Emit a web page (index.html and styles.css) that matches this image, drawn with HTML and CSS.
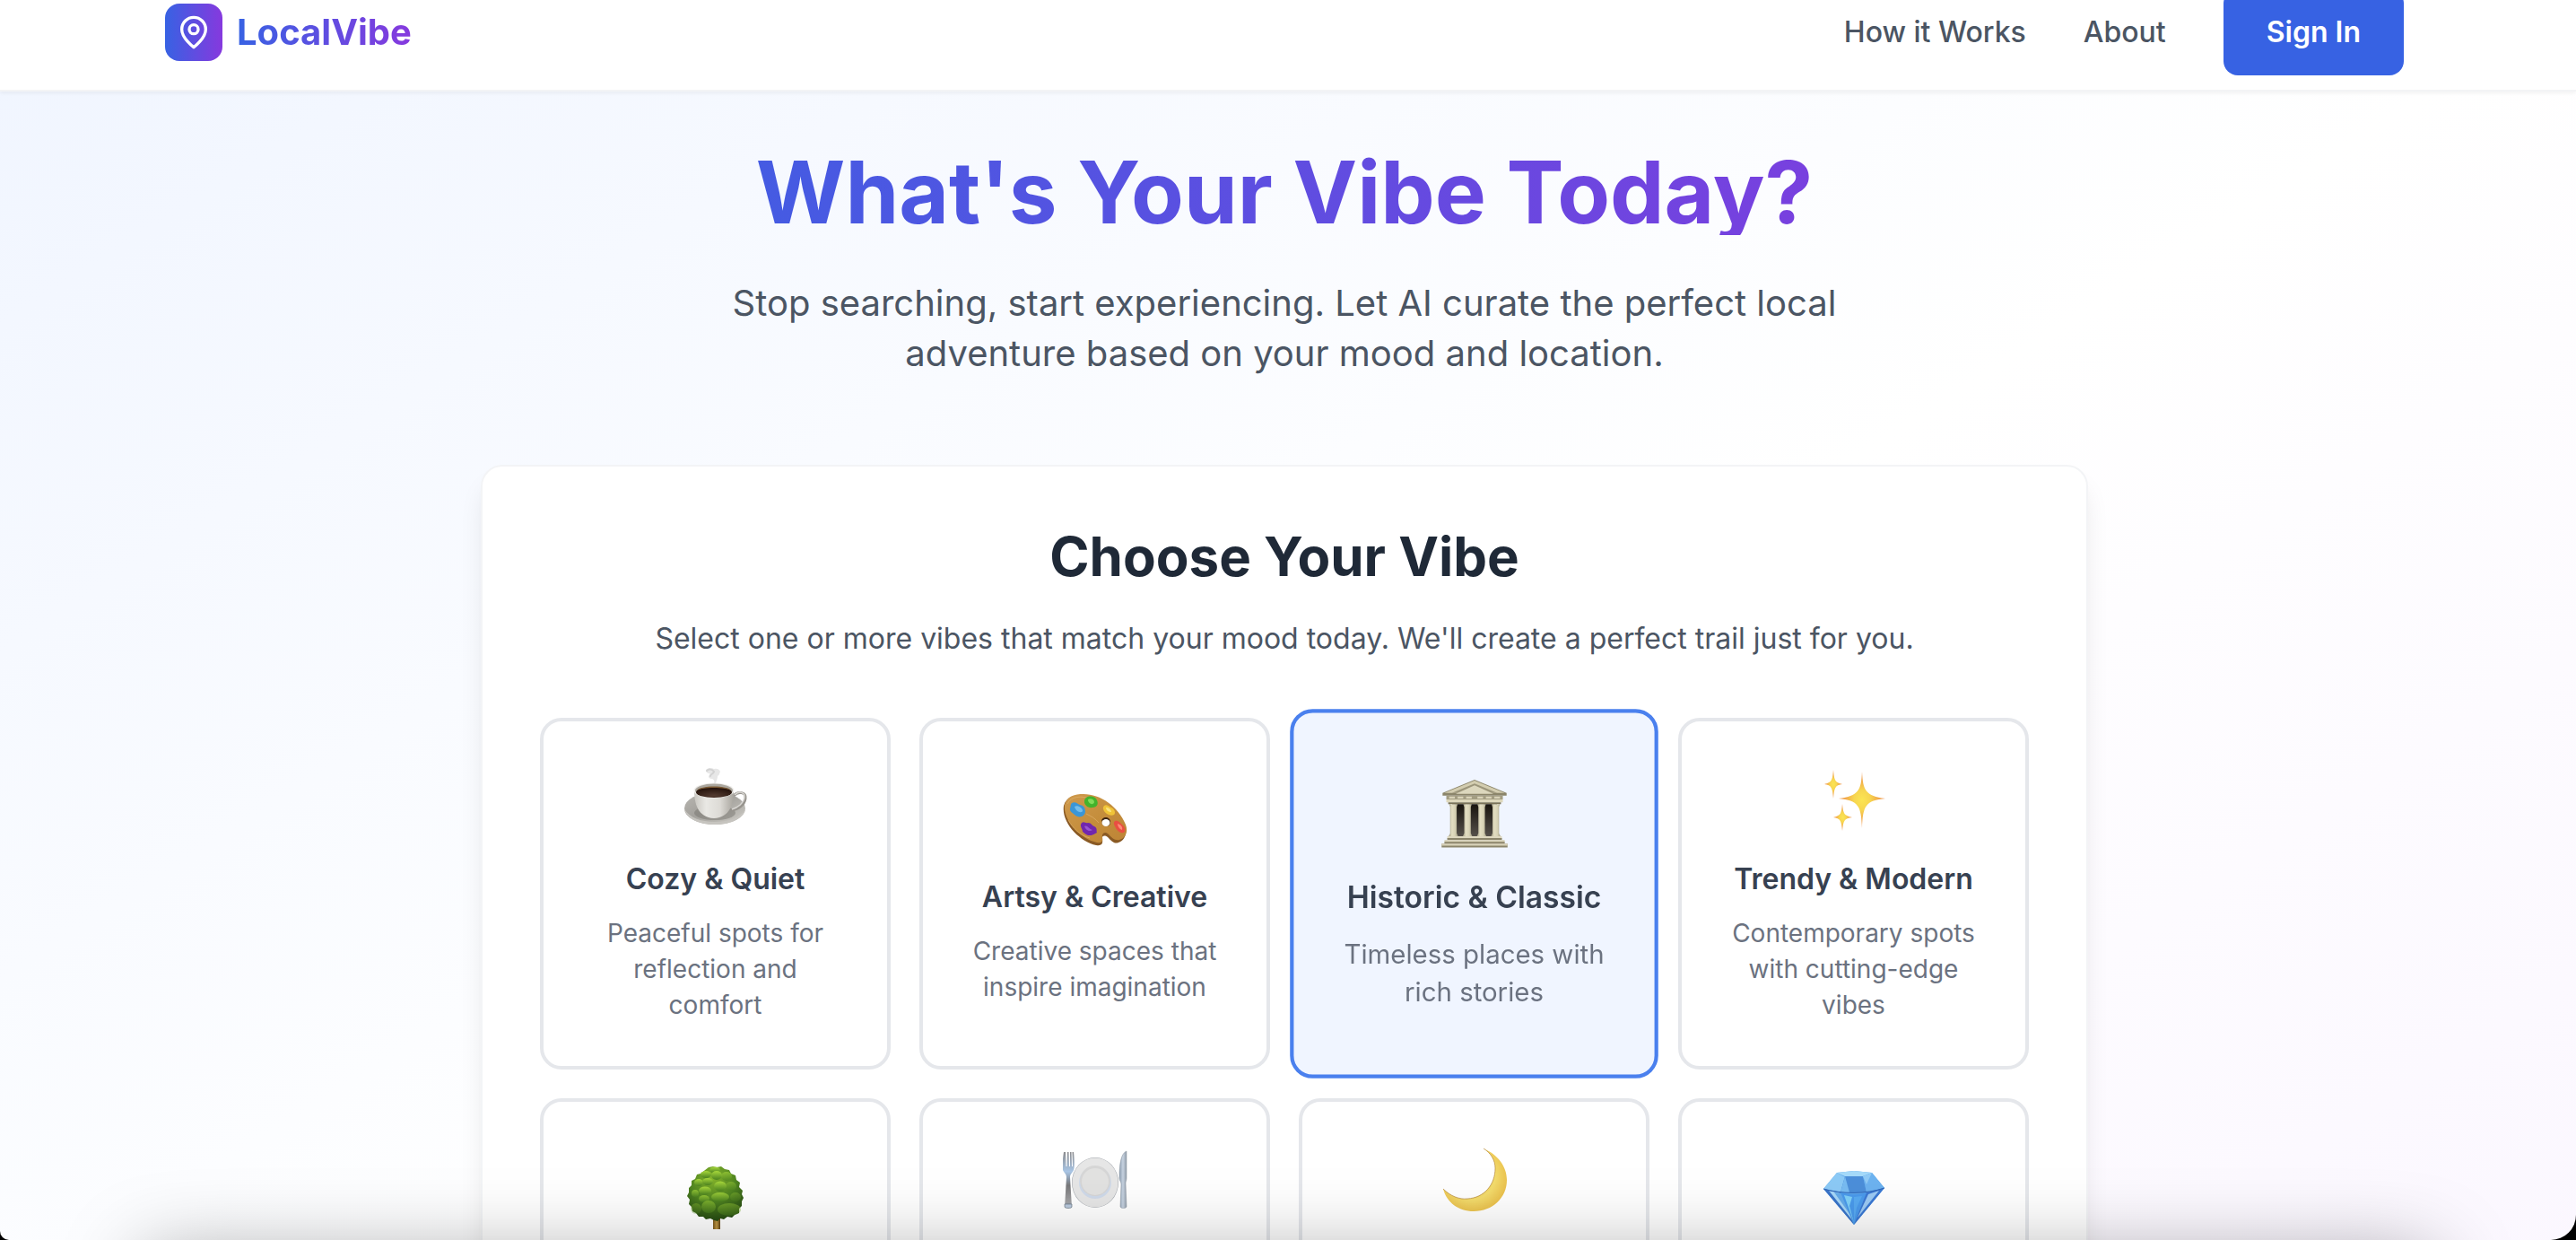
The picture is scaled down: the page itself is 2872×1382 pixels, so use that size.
FILE: index.html
```
<!DOCTYPE html>
<html lang="en">
<head>
    <meta charset="UTF-8">
    <meta name="viewport" content="width=device-width, initial-scale=1.0">
    <title>LocalVibe</title>
    <link rel="stylesheet" href="styles.css">
</head>
<body>
<div class="page">
    <header class="header">
        <div class="header-inner">
            <a class="logo" href="#">
                <span class="logo-icon">
                    <svg viewBox="0 0 24 24" fill="none" stroke="#fff" stroke-width="2" stroke-linecap="round" stroke-linejoin="round">
                        <path d="M20 10c0 6-8 12-8 12s-8-6-8-12a8 8 0 0 1 16 0Z"/>
                        <circle cx="12" cy="10" r="3"/>
                    </svg>
                </span>
                <span class="logo-text">LocalVibe</span>
            </a>
            <nav class="nav">
                <a href="#">How it Works</a>
                <a href="#">About</a>
                <button type="button" class="sign-in">Sign In</button>
            </nav>
        </div>
    </header>

    <main class="main">
        <section class="hero">
            <h1>What's Your Vibe Today?</h1>
            <p>Stop searching, start experiencing. Let AI curate the perfect local adventure based on your mood and location.</p>
        </section>

        <section class="panel">
            <h2>Choose Your Vibe</h2>
            <p class="panel-text">Select one or more vibes that match your mood today. We'll create a perfect trail just for you.</p>

            <div class="vibes">
                <button type="button" class="vibe" aria-pressed="false">
                    <svg class="vibe-icon" viewBox="0 0 72 80">
                        <defs>
                            <linearGradient id="cup" x1="0" x2="1">
                                <stop offset="0" stop-color="#c9c7c1"/>
                                <stop offset=".3" stop-color="#e9e8e4"/>
                                <stop offset=".65" stop-color="#dddbd6"/>
                                <stop offset="1" stop-color="#a8a59e"/>
                            </linearGradient>
                            <linearGradient id="saucer" x1="0" y1="0" x2="1" y2="1">
                                <stop offset="0" stop-color="#b9b7b2"/>
                                <stop offset=".45" stop-color="#a3a19c"/>
                                <stop offset="1" stop-color="#d0cec8"/>
                            </linearGradient>
                            <radialGradient id="coffee" cx=".5" cy=".8" r=".7">
                                <stop offset="0" stop-color="#533b30"/>
                                <stop offset="1" stop-color="#24120b"/>
                            </radialGradient>
                        </defs>
                        <path d="M25 6c3-3 7-2 9-1 3-1 6 0 7 3-1 2-1 4-3 5 0 3-1 4-2 8h-2c1-3 0-4-2-5-3 0-4-1-4-3 1-1 2-2 1-3-2 0-4-1-4-4z" fill="#c4c4c4" opacity=".4"/>
                        <path d="M26 7c2-2 6-2 8 1-1 4-4 2-4 5" fill="none" stroke="#b5b5b5" stroke-width="2" stroke-linecap="round" opacity=".4"/>
                        <ellipse cx="35" cy="49" rx="34" ry="18" fill="url(#saucer)"/>
                        <path d="M1 50c3 11 17 17 34 17S66 61 69 50c-6 9-18 14-34 14S7 59 1 50z" fill="#c6c4bf"/>
                        <ellipse cx="35" cy="54" rx="23" ry="8" fill="#777570" opacity=".5"/>
                        <path d="M56 35c5-6 14-4 13 3-1 7-8 12-16 13" fill="none" stroke="#97948e" stroke-width="3"/>
                        <path d="M57 34c5-5 12-3 11 3-1 6-7 11-14 13" fill="none" stroke="#d9d7d3" stroke-width="1.500"/>
                        <path d="M12 28c0 16 4 31 22 32 18-1 22-16 22-32z" fill="url(#cup)"/>
                        <ellipse cx="34" cy="29" rx="22.500" ry="8.500" fill="#eeedea"/>
                        <ellipse cx="34" cy="29" rx="21" ry="7.500" fill="#aaa69e"/>
                        <ellipse cx="34" cy="31" rx="20" ry="6" fill="url(#coffee)"/>
                        <path d="M15 29c3-6 35-6 38 0-6-4-32-4-38 0z" fill="#7c5a33"/>
                    </svg>
                    <span class="vibe-title">Cozy &amp; Quiet</span>
                    <span class="vibe-text">Peaceful spots for reflection and comfort</span>
                </button>

                <button type="button" class="vibe" aria-pressed="false">
                    <svg class="vibe-icon" viewBox="0 0 72 80">
                        <defs>
                            <linearGradient id="wood" x1="0" y1="0" x2="1" y2="1">
                                <stop offset="0" stop-color="#cf9a4e"/>
                                <stop offset=".5" stop-color="#c58e3c"/>
                                <stop offset="1" stop-color="#bd8436"/>
                            </linearGradient>
                        </defs>
                        <path d="M2 25C5 15 13 13 23 13c19 0 39 14 47 34 3 9 0 17-7 19-5 2-8-2-12-6-4-3-7-1-6 2 1 6-1 8-7 7C20 65-1 44 2 25z" transform="translate(-1 1)" fill="#8a5a24"/>
                        <path fill-rule="evenodd" d="M2 25C5 15 13 13 23 13c19 0 39 14 47 34 3 8 0 15-7 17-5 1-8-2-12-6-4-4-8-1-7 3 1 5-1 7-6 6C20 63 0 43 2 25zM53 45c0-7-10-8-10-1 0 6 10 7 10 1z" fill="url(#wood)"/>
                        <path d="M43 43c1-6 10-5 10 1 0 3-2 5-4 4 2-4-1-7-6-5z" fill="#3c2410"/>
                        <ellipse cx="48" cy="45" rx="4.500" ry="4" fill="#fff"/>
                        <path d="M5 24c4-9 16-9 25-6M6 42c5 9 13 17 24 20M26 35c6 3 10 5 14 10" fill="none" stroke="#dfb068" stroke-width="1" opacity=".7"/>
                        <path d="M10 23c4-2 6 1 9 2 5 1 6 4 6 8-1 6-8 7-12 3-2-2-6-4-5-7 1-1 0-4 2-6z" fill="#3b96d6"/>
                        <path d="M13 27c3-2 9 1 9 5-2 3-8 0-9-5z" fill="#74bdea"/>
                        <path d="M26 17c4-3 11-1 12 3 2 4 0 8-5 8-5 1-9-3-9-6 0-2 0-4 2-5z" fill="#43b32c"/>
                        <path d="M28 19c3-2 7 0 7 3-1 4-7 2-7-3z" fill="#81dc58"/>
                        <path d="M46 26c3-2 5 1 8 2 4 2 5 6 3 8-4 2-9-1-11-4-1-2-2-4 0-6z" fill="#f0c337"/>
                        <path d="M48 28c3 0 6 2 6 5-3 0-6-2-6-5z" fill="#fae37b"/>
                        <path d="M58 43c3-1 5 1 8 4 4 3 4 7 2 9-5 1-8-3-10-7-1-2-2-4 0-6z" fill="#e94f42"/>
                        <path d="M61 46c3 1 6 3 5 7-3-1-5-4-5-7z" fill="#ff8b78"/>
                        <path d="M21 45c3-2 4 1 7 0 4 0 4 3 7 4 4 2 2 5 3 7-3 1-4 3-8 3-4 0-5-2-8-4 0-4-4-6-1-10z" fill="#7127ad"/>
                        <path d="M24 49c3-2 5 3 9 4-3 2-7 1-9-4z" fill="#9955d1"/>
                    </svg>
                    <span class="vibe-title">Artsy &amp; Creative</span>
                    <span class="vibe-text">Creative spaces that inspire imagination</span>
                </button>

                <button type="button" class="vibe selected" aria-pressed="true">
                    <svg class="vibe-icon" viewBox="0 0 72 80">
                        <defs>
                            <linearGradient id="stone" x1="0" x2="1">
                                <stop offset="0" stop-color="#8f8a70"/>
                                <stop offset=".35" stop-color="#e3dec2"/>
                                <stop offset=".65" stop-color="#d8d3b6"/>
                                <stop offset="1" stop-color="#99947a"/>
                            </linearGradient>
                            <linearGradient id="inside" x1="0" y1="0" x2="0" y2="1">
                                <stop offset="0" stop-color="#18140e"/>
                                <stop offset="1" stop-color="#55504a"/>
                            </linearGradient>
                        </defs>
                        <path d="M36 3 70 17v3H2v-3z" fill="#8b856a"/>
                        <path d="M36 4 68 17H4z" fill="#d3cdb0"/>
                        <path d="M36 7 60 17H12z" fill="#9c967b"/>
                        <path d="M36 9 56 18H16z" fill="#dcd7bd"/>
                        <path d="M6 20h60v4H6z" fill="#a39d82"/>
                        <path d="M9 21h6v2H9zM18 21h6v2h-6zM27 21h6v2h-6zM39 21h6v2h-6zM48 21h6v2h-6zM57 21h6v2h-6z" fill="#d8d2b8"/>
                        <path d="M6 24h60v3H6z" fill="#ddd7bb"/>
                        <path d="M8 27h56v2H8z" fill="#7b7459"/>
                        <path d="M12 29h48v34H12z" fill="url(#inside)"/>
                        <path d="M9 29h9l-1 3v28l2 4H8l2-4V32z" fill="url(#stone)"/>
                        <path d="M24 29h9l-1 3v28l2 4H23l2-4V32z" fill="url(#stone)"/>
                        <path d="M39 29h9l-1 3v28l2 4H38l2-4V32z" fill="url(#stone)"/>
                        <path d="M54 29h9l-1 3v28l2 4H53l2-4V32z" fill="url(#stone)"/>
                        <path d="M7 63h58v3H7z" fill="#ded8bf"/>
                        <path d="M7 65h58v2H7z" fill="#8b856b"/>
                        <path d="M4 67h64v3H4z" fill="#d6d0b5"/>
                        <path d="M4 69h64v2H4z" fill="#8b856b"/>
                        <path d="M1 71h70v4H1z" fill="#8b856b"/>
                        <path d="M1 71h70v2H1z" fill="#d8d2b8"/>
                    </svg>
                    <span class="vibe-title">Historic &amp; Classic</span>
                    <span class="vibe-text">Timeless places with rich stories</span>
                </button>

                <button type="button" class="vibe" aria-pressed="false">
                    <svg class="vibe-icon" viewBox="0 0 72 80">
                        <defs>
                            <radialGradient id="spark">
                                <stop offset="0" stop-color="#fbe552"/>
                                <stop offset=".35" stop-color="#f7d650"/>
                                <stop offset=".7" stop-color="#f2a94a"/>
                                <stop offset="1" stop-color="#ef8f4c"/>
                            </radialGradient>
                        </defs>
                        <path d="M45 8c1 21 4 27 26 30-22 2-25 8-26 33-1-25-4-31-26-33 22-3 25-9 26-30z" fill="url(#spark)"/>
                        <path d="M13 6c1 12 2 14 10 16-8 1-9 4-10 16-1-12-2-15-10-16 8-2 9-4 10-16z" fill="url(#spark)"/>
                        <path d="M23 44c1 11 2 13 11 15-9 1-10 4-11 15-1-11-2-14-10-15 8-2 9-4 10-15z" fill="url(#spark)"/>
                    </svg>
                    <span class="vibe-title">Trendy &amp; Modern</span>
                    <span class="vibe-text">Contemporary spots with cutting-edge vibes</span>
                </button>

                <button type="button" class="vibe short" aria-pressed="false">
                    <svg class="vibe-icon" viewBox="0 0 72 80">
                        <defs>
                            <radialGradient id="leaf" cx=".45" cy=".2" r=".85">
                                <stop offset="0" stop-color="#86b52c"/>
                                <stop offset=".5" stop-color="#4f8420"/>
                                <stop offset="1" stop-color="#1f4010"/>
                            </radialGradient>
                            <linearGradient id="clump" x1="0" y1="0" x2="0" y2="1">
                                <stop offset="0" stop-color="#a8d83c"/>
                                <stop offset="1" stop-color="#4c8320"/>
                            </linearGradient>
                            <linearGradient id="trunk" x1="0" x2="1">
                                <stop offset="0" stop-color="#79571d"/>
                                <stop offset=".5" stop-color="#c39a45"/>
                                <stop offset="1" stop-color="#5f4315"/>
                            </linearGradient>
                        </defs>
                        <path d="M33 60h8v14h-8z" fill="url(#trunk)"/>
                        <path d="M28 5l5-1 4 1 5-1 4 3 5 1 2 4 5 2 1 5 4 3-1 5 4 4-1 4 2 4-2 4 0 5-3 3 0 5-5 2-3 3-5-1-4 3-4-1-3 3-4-1-4-2-5 1-3-3-5 0-3-4-4-2-1-5-3-3 1-5-3-4 2-4 0-5 3-3 0-5 4-2 2-5 4-1z" fill="url(#leaf)"/>
                        <g fill="url(#clump)">
                            <ellipse cx="35" cy="8" rx="6" ry="3.500"/>
                            <ellipse cx="25" cy="13" rx="6" ry="4"/>
                            <ellipse cx="37" cy="14" rx="6" ry="5"/>
                            <ellipse cx="48" cy="15" rx="6" ry="5" opacity=".6"/>
                            <ellipse cx="17" cy="22" rx="5" ry="4"/>
                            <ellipse cx="27" cy="21" rx="6" ry="4"/>
                            <ellipse cx="41" cy="26" rx="7" ry="5.500"/>
                            <ellipse cx="53" cy="26" rx="6" ry="5" opacity=".4"/>
                            <ellipse cx="24" cy="31" rx="7" ry="4.500"/>
                            <ellipse cx="13" cy="34" rx="4" ry="4" opacity=".7"/>
                            <ellipse cx="41" cy="38" rx="10" ry="5" opacity=".8"/>
                            <ellipse cx="23" cy="40" rx="6" ry="4" opacity=".7"/>
                            <ellipse cx="58" cy="38" rx="6" ry="5" opacity=".3"/>
                            <ellipse cx="28" cy="49" rx="8" ry="7" opacity=".5"/>
                            <ellipse cx="51" cy="52" rx="13" ry="7" opacity=".4"/>
                            <ellipse cx="14" cy="51" rx="6" ry="6" opacity=".3"/>
                        </g>
                    </svg>
                    <span class="vibe-title"></span>
                    <span class="vibe-text"></span>
                </button>

                <button type="button" class="vibe" aria-pressed="false">
                    <svg class="vibe-icon" viewBox="0 0 72 80">
                        <defs>
                            <linearGradient id="metal" x1="0" y1="0" x2="0" y2="1">
                                <stop offset="0" stop-color="#8c8c8e"/>
                                <stop offset=".35" stop-color="#a9c6e6"/>
                                <stop offset=".6" stop-color="#777779"/>
                                <stop offset=".9" stop-color="#a2a2a4"/>
                                <stop offset="1" stop-color="#8097b1"/>
                            </linearGradient>
                            <linearGradient id="blade" x1="0" x2="1">
                                <stop offset="0" stop-color="#8d9eb1"/>
                                <stop offset=".5" stop-color="#c7d3e1"/>
                                <stop offset="1" stop-color="#929daa"/>
                            </linearGradient>
                        </defs>
                        <ellipse cx="36" cy="42" rx="26" ry="28" fill="#a3a8ae"/>
                        <ellipse cx="36" cy="42" rx="25.500" ry="27.500" fill="#e6e6e6"/>
                        <circle cx="36" cy="42" r="18" fill="#cfdaea"/>
                        <circle cx="36" cy="40" r="17" fill="#d6d6d6"/>
                        <circle cx="36" cy="41" r="15" fill="#e2e2e1"/>
                        <path d="M1 8h2l.5 16h1L5 8h1.500l.5 16h1L8 8h1.500l.5 16h1l-.5-16H12c1 9 1 17 0 20-1 3-4 4-4 8l2 34H2l2-34c0-4-3-5-4-8-1-5 0-14 1-20z" fill="url(#metal)"/>
                        <path d="M2 66h8v3c0 2-8 2-8 0z" fill="#b9c9dc" stroke="#6d7884" stroke-width=".7"/>
                        <path d="M71 7c-5 2-8 10-8 30 0 3 2 4 2 7l-1 25c1 2 6 2 7 0l-1-26c0-3 1-3 1-6z" fill="url(#blade)" stroke="#8b949e" stroke-width=".5"/>
                    </svg>
                    <span class="vibe-title"></span>
                    <span class="vibe-text"></span>
                </button>

                <button type="button" class="vibe" aria-pressed="false">
                    <svg class="vibe-icon" viewBox="0 0 72 80">
                        <defs>
                            <radialGradient id="moon" cx=".45" cy=".45" r=".6">
                                <stop offset="0" stop-color="#d9ad3c"/>
                                <stop offset=".6" stop-color="#f3dc6d"/>
                                <stop offset="1" stop-color="#e9bd48"/>
                            </radialGradient>
                        </defs>
                        <path d="M46 4c16 7 26 20 26 35 0 20-16 35-37 35C18 74 5 64 1 49c8 8 18 12 27 11 19-1 31-16 31-34 0-9-5-17-13-22z" fill="url(#moon)"/>
                        <path d="M1 49c8 8 18 12 27 11 19-1 31-16 31-34 0-9-5-17-13-22" fill="none" stroke="#a9792c" stroke-width=".6"/>
                    </svg>
                    <span class="vibe-title"></span>
                    <span class="vibe-text"></span>
                </button>

                <button type="button" class="vibe short" aria-pressed="false">
                    <svg class="vibe-icon" viewBox="0 0 72 80">
                        <path d="M17 11 36 9l20 2 14 17-34 41L2 29z" fill="#5da5ea"/>
                        <path d="M17 11 2 29l19 4 5-17z" fill="#8ccaf6"/>
                        <path d="M17 11 36 9l20 2-10 4H26z" fill="#a5dafa"/>
                        <path d="M26 15h20l4 18H21z" fill="#4c8fda"/>
                        <path d="M26 15 21 33h10z" fill="#78bcf2"/>
                        <path d="M56 11 70 28l-20 5-4-18z" fill="#6db3f0"/>
                        <path d="M56 11 50 24 46 15z" fill="#91cbf6"/>
                        <path d="M2 29l19 4 15 36z" fill="#3a74c9"/>
                        <path d="M8 31l13 3 14 31z" fill="#a8d8f8"/>
                        <path d="M14 33l8 1 12 27z" fill="#64abea"/>
                        <path d="M21 33c10 3 20 3 29 0L36 69z" fill="#4a9aec"/>
                        <path d="M25 36l9 2-3 10 5 19z" fill="#7fd0f8"/>
                        <path d="M36 38l9-1-6 13-3 17z" fill="#58aaf2"/>
                        <path d="M50 33l20-5-34 41z" fill="#3b78d3"/>
                        <path d="M52 35l12-4-24 30z" fill="#9ccaf4"/>
                        <path d="M2 29c20 6 48 6 68-1" fill="none" stroke="#2f66b8" stroke-width="1"/>
                    </svg>
                    <span class="vibe-title"></span>
                    <span class="vibe-text"></span>
                </button>
            </div>
        </section>
    </main>
</div>
<div class="bottom-shade"></div>
</body>
</html>
```
FILE: styles.css
```
* {
    box-sizing: border-box;
}

html {
    background-color: #000;
}

body {
    position: relative;
    height: 100vh;
    margin: 0;
    overflow: hidden;
    font-family: Inter, "Liberation Sans", sans-serif;
    font-size: 32px;
    line-height: 48px;
    color: #4b5563;
}

h1, h2, p {
    margin: 0;
}

button {
    font: inherit;
    cursor: pointer;
}

.page {
    height: 100vh;
    overflow: hidden;
    border-bottom-left-radius: 10px;
    border-bottom-right-radius: 28px;
    background: linear-gradient(to bottom right, #f0f5ff, #ffffff, #faf5ff);
    background-size: 100% 1820px;
}

.header {
    margin-top: -28px;
    padding: 16px 8px 16px 0;
    background-color: #ffffff;
    border-bottom: 2px solid #f3f4f6;
    box-shadow: 0 2px 4px rgba(0, 0, 0, 0.05);
}

.header-inner {
    display: flex;
    align-items: center;
    justify-content: space-between;
    max-width: 2560px;
    margin: 0 auto;
    padding: 0 32px;
}

.logo {
    display: flex;
    align-items: center;
    gap: 16px;
    text-decoration: none;
}

.logo-icon {
    display: flex;
    align-items: center;
    justify-content: center;
    width: 64px;
    height: 64px;
    border-radius: 16px;
    background: linear-gradient(to right, #3762e3, #8639de);
}

.logo-icon svg {
    width: 40px;
    height: 40px;
}

.logo-text {
    font-size: 40px;
    line-height: 56px;
    font-weight: 700;
    background: linear-gradient(to right, #3762e3, #8639de);
    background-clip: text;
    -webkit-background-clip: text;
    color: transparent;
}

.nav {
    display: flex;
    align-items: center;
    gap: 64px;
}

.nav a {
    font-weight: 500;
    color: #4b5563;
    text-decoration: none;
}

.sign-in {
    padding: 24px 48px;
    border: none;
    border-radius: 16px;
    background-color: #3762e3;
    color: #ffffff;
    font-weight: 600;
}

.main {
    padding: 64px 8px 128px 0;
}

.hero,
.panel {
    max-width: 1792px;
    margin: 0 auto;
    text-align: center;
}

.hero {
    margin-bottom: 96px;
}

.hero h1 {
    margin-bottom: 48px;
    font-size: 96px;
    line-height: 96px;
    font-weight: 700;
    background: linear-gradient(to right, #3762e3, #8639de);
    background-clip: text;
    -webkit-background-clip: text;
    color: transparent;
}

.hero p {
    max-width: 1344px;
    margin: 0 auto;
    font-size: 40px;
    line-height: 56px;
}

.panel {
    padding: 64px;
    background-color: #ffffff;
    border: 2px solid #f3f4f6;
    border-radius: 24px;
    box-shadow: 0 20px 30px -6px rgba(0, 0, 0, 0.1), 0 8px 12px -8px rgba(0, 0, 0, 0.1);
}

.panel h2 {
    margin-bottom: 32px;
    font-size: 60px;
    line-height: 72px;
    font-weight: 700;
    color: #1f2937;
}

.panel-text {
    margin-bottom: 64px;
}

.vibes {
    display: grid;
    grid-template-columns: repeat(4, 1fr);
    grid-auto-rows: 392px;
    gap: 32px;
}

.vibe {
    display: flex;
    flex-direction: column;
    align-items: center;
    justify-content: center;
    padding: 48px;
    background-color: #ffffff;
    border: 4px solid #e5e7eb;
    border-radius: 24px;
    text-align: center;
}

.vibe.selected {
    background-color: #f0f5ff;
    border-color: #4a80ee;
    transform: scale(1.05);
}

.vibe-icon {
    flex-shrink: 0;
    width: 72px;
    height: 80px;
    margin-bottom: 24px;
}

.vibe-title {
    min-height: 48px;
    margin-bottom: 16px;
    font-weight: 600;
    color: #374151;
}

.vibe-text {
    font-size: 28px;
    line-height: 40px;
    color: #6b7280;
}

.vibe-text:empty {
    min-height: 120px;
}

.vibe.short .vibe-text {
    min-height: 80px;
}

/* soft shade rising from the bottom edge of the window */
.bottom-shade {
    position: fixed;
    top: calc(100% + 20px);
    left: 160px;
    right: 160px;
    height: 200px;
    box-shadow: 0 0 90px rgba(0, 0, 0, 0.38);
}
```
